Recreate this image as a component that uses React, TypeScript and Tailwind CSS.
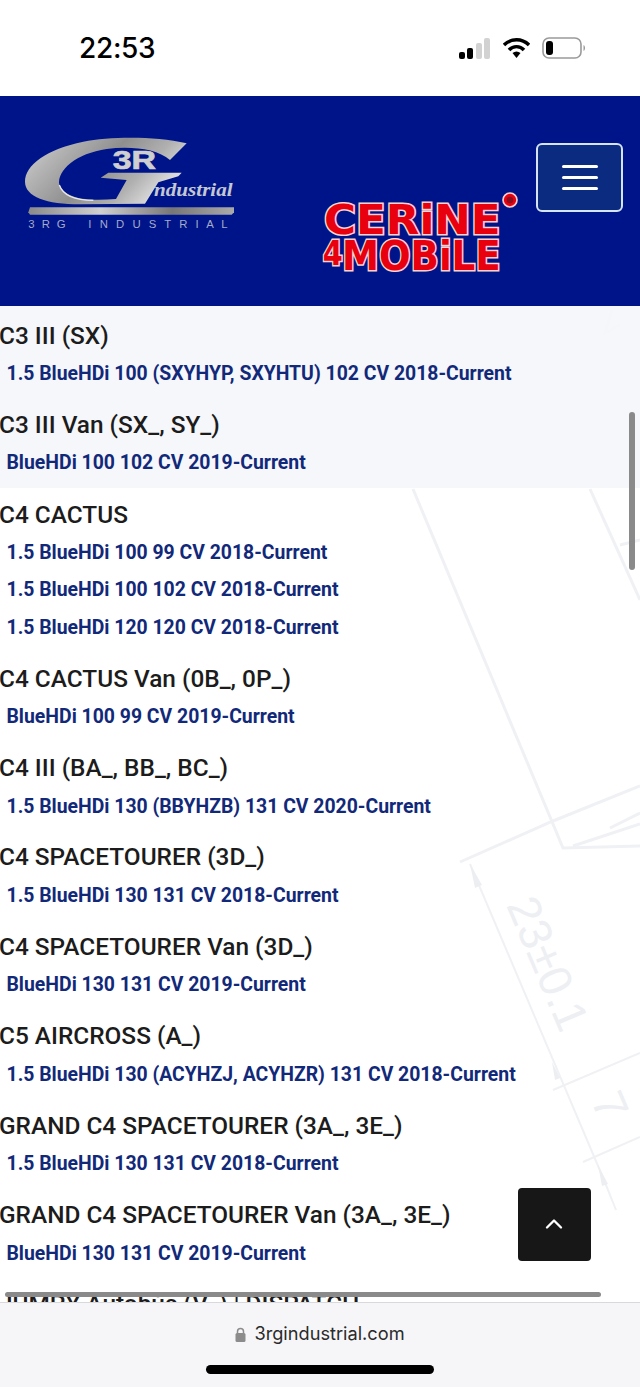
import React from "react";
import { ChevronUp } from "lucide-react";

const sections = [
  { title: "C3 III (SX)", links: ["1.5 BlueHDi 100 (SXYHYP, SXYHTU) 102 CV 2018-Current"] },
  { title: "C3 III Van (SX_, SY_)", links: ["BlueHDi 100 102 CV 2019-Current"] },
];

const sections2 = [
  {
    title: "C4 CACTUS",
    links: ["1.5 BlueHDi 100 99 CV 2018-Current", "1.5 BlueHDi 100 102 CV 2018-Current", "1.5 BlueHDi 120 120 CV 2018-Current"],
  },
  { title: "C4 CACTUS Van (0B_, 0P_)", links: ["BlueHDi 100 99 CV 2019-Current"] },
  { title: "C4 III (BA_, BB_, BC_)", links: ["1.5 BlueHDi 130 (BBYHZB) 131 CV 2020-Current"] },
  { title: "C4 SPACETOURER (3D_)", links: ["1.5 BlueHDi 130 131 CV 2018-Current"] },
  { title: "C4 SPACETOURER Van (3D_)", links: ["BlueHDi 130 131 CV 2019-Current"] },
  { title: "C5 AIRCROSS (A_)", links: ["1.5 BlueHDi 130 (ACYHZJ, ACYHZR) 131 CV 2018-Current"] },
  { title: "GRAND C4 SPACETOURER (3A_, 3E_)", links: ["1.5 BlueHDi 130 131 CV 2018-Current"] },
  { title: "GRAND C4 SPACETOURER Van (3A_, 3E_)", links: ["BlueHDi 130 131 CV 2019-Current"] },
  { title: "JUMPY Autobús (V_) | DISPATCH", links: [] as string[] },
];

function Section({ title, links }: { title: string; links: string[] }) {
  return (
    <div className="pb-[17.5px]">
      <h3 className="h-[30px] -ml-[1px] text-[24.4px] leading-[30px] font-medium text-[#1c1c1c] whitespace-nowrap">{title}</h3>
      <ul className="mt-[4.5px]">
        {links.map((l) => (
          <li key={l} className="h-[37.4px] pl-[6.5px] text-[19.4px] leading-[37.4px] font-bold text-[#12297a] whitespace-nowrap">
            {l}
          </li>
        ))}
      </ul>
    </div>
  );
}

function StatusBar() {
  return (
    <div className="h-[96px] bg-white flex items-center pl-[79px] pr-[54px] shrink-0">
      <span className="text-[28px] font-medium text-black font-['Inter',sans-serif] tracking-[-0.3px]">22:53</span>
      <div className="ml-auto flex items-center">
        <svg width="32" height="21" viewBox="0 0 32 21">
          <rect x="0" y="14" width="6" height="7" rx="2" fill="#000" />
          <rect x="8" y="10" width="6" height="11" rx="2" fill="#000" />
          <rect x="17" y="5" width="6" height="16" rx="2" fill="#d2d2d2" />
          <rect x="25" y="0" width="6" height="21" rx="2" fill="#d2d2d2" />
        </svg>
        <svg width="27" height="20" viewBox="0 0 27 20" className="ml-[12px]">
          <path d="M1 7 C8 0 19 0 26 7" stroke="#000" strokeWidth="3.4" fill="none" />
          <path d="M6 12 C10 7.5 17 7.5 21 12" stroke="#000" strokeWidth="3.4" fill="none" />
          <path d="M9.5 15 C12 13 15 13 17.5 15 L13.5 20 Z" fill="#000" />
        </svg>
        <svg width="44" height="22" viewBox="0 0 44 22" className="ml-[12px]">
          <rect x="1" y="1" width="38" height="20" rx="6" fill="none" stroke="#9a9a9a" strokeWidth="1.6" />
          <rect x="4" y="4" width="7" height="14" rx="3" fill="#000" />
          <path d="M41.5 8 C43.5 9 43.5 13 41.5 14 Z" fill="#9a9a9a" />
        </svg>
      </div>
    </div>
  );
}

function Logo3RG() {
  const small = { fontFamily: "'Liberation Sans', sans-serif", fontSize: 34, fill: "#a4abc8" };
  return (
    <svg width="240" height="120" viewBox="0 0 720 360" className="shrink-0">
      <defs>
        <linearGradient id="silver" x1="0" y1="0" x2="1" y2="0.4">
          <stop offset="0" stopColor="#d6d6d6" />
          <stop offset="0.25" stopColor="#b4b4b4" />
          <stop offset="0.55" stopColor="#8f8f8f" />
          <stop offset="0.8" stopColor="#b0b0b0" />
          <stop offset="1" stopColor="#dcdcdc" />
        </linearGradient>
        <linearGradient id="bar" x1="0" y1="0" x2="1" y2="0">
          <stop offset="0" stopColor="#8a8a8a" />
          <stop offset="0.35" stopColor="#d0d0d0" />
          <stop offset="0.7" stopColor="#777" />
          <stop offset="1" stopColor="#aaa" />
        </linearGradient>
      </defs>
      <path
        d="M530 55 C430 32 300 35 220 50 C110 72 45 120 45 170 C45 215 110 238 210 238 L405 236 L445 172 L505 154 L515 143 L295 143 L272 158 L350 165 L318 222 C240 228 170 225 148 180 C140 135 200 85 290 72 C360 63 440 70 480 105 Z"
        fill="url(#silver)"
      />
      <path d="M148 180 C160 215 200 226 250 226" fill="none" stroke="#e8e8e8" strokeWidth="4" />
      <text x="308" y="132" fontFamily="'Liberation Sans', sans-serif" fontWeight="700" fontSize="76" fill="#cfcfcf" stroke="#cfcfcf" strokeWidth="2" textLength="130" lengthAdjust="spacingAndGlyphs">
        3R
      </text>
      <text x="432" y="213" fontFamily="'Liberation Serif', serif" fontStyle="italic" fontWeight="700" fontSize="58" fill="#c4c8d2" textLength="236" lengthAdjust="spacingAndGlyphs">
        ndustrial
      </text>
      <path d="M60 247 L672 247 L672 262 L665 269 L60 269 L55 262 Z" fill="url(#bar)" />
      <text x="55" y="310" textLength="112" {...small}>3 R G</text>
      <text x="235" y="310" textLength="418" {...small}>I N D U S T R I A L</text>
    </svg>
  );
}

function LogoCerine() {
  const letters = {
    fontFamily: "'DejaVu Sans', sans-serif",
    fontWeight: 700,
    fill: "#e8000f",
    stroke: "#f8d4d4",
    strokeWidth: 9,
    paintOrder: "stroke",
    lengthAdjust: "spacingAndGlyphs" as const,
  };
  return (
    <svg width="220" height="100" viewBox="0 0 660 300" className="shrink-0">
      <text x="42" y="163" fontSize="124" textLength="530" {...letters}>
        CERiNE
      </text>
      <text x="38" y="254" fontSize="100" textLength="60" {...letters}>
        4
      </text>
      <text x="96" y="270" fontSize="122" textLength="476" {...letters}>
        MOBiLE
      </text>
      <circle cx="600" cy="60" r="21" fill="#e8000f" stroke="#f6cfd0" strokeWidth="5" />
      <circle cx="600" cy="60" r="10" fill="#8a1020" />
    </svg>
  );
}

function Header() {
  return (
    <header className="h-[210px] bg-[#00148a] shrink-0 flex items-start pl-[10px] pt-[29px]">
      <Logo3RG />
      <div className="ml-[60px] mt-[55px]">
        <LogoCerine />
      </div>
      <button className="ml-[6px] mt-[18px] w-[87px] h-[69px] rounded-[6px] border-2 border-[#d5e3f5] bg-[#0a2b80] flex flex-col items-center justify-center gap-[8px]">
        <span className="block w-[36px] h-[3px] bg-white rounded-sm" />
        <span className="block w-[36px] h-[3px] bg-white rounded-sm" />
        <span className="block w-[36px] h-[3px] bg-white rounded-sm" />
      </button>
    </header>
  );
}

function Blueprint() {
  return (
    <svg className="absolute inset-0" width="640" height="996" viewBox="0 306 640 996" fill="none" stroke="#f0f1f4" strokeWidth="3">
      <path d="M413 489 L563 848 L640 846" />
      <path d="M590 489 L640 600" />
      <path d="M460 862 L553 821 L640 786" />
      <path d="M610 828 L640 813 M573 846 L640 824" />
      <path d="M470 864 L604 1180 L616 1210" strokeWidth="2" />
      <path d="M553 1090 L640 1053 M583 1162 L640 1137" strokeWidth="2" />
      <path d="M620 545 L640 540 M612 310 L605 333 L620 325" />
      <path d="M470 864 L482 885 L475 888 Z" fill="#eceef2" stroke="none" />
      <path d="M552 1062 L560 1078 L555 1080 Z M598 1165 L608 1184 L602 1186 Z" fill="#eceef2" stroke="none" />
      <text x="0" y="0" transform="translate(506 905) rotate(67)" fontFamily="'Liberation Sans', sans-serif" fontSize="46" fill="#edeff3" stroke="none">
        23±0.1
      </text>
      <text x="0" y="0" transform="translate(590.5 1100) rotate(67)" fontFamily="'Liberation Sans', sans-serif" fontSize="46" fill="#edeff3" stroke="none">
        7
      </text>
    </svg>
  );
}

export default function App() {
  return (
    <div className="w-[640px] h-[1387px] flex flex-col overflow-hidden bg-white font-['Roboto',sans-serif]">
      <StatusBar />
      <Header />
      <main className="relative flex-1 overflow-hidden bg-white">
        <Blueprint />
        <div className="relative">
          <div className="h-[182px] pt-[14.5px] bg-[#f4f6fb]/90 overflow-hidden">
            {sections.map((s) => (
              <Section key={s.title} {...s} />
            ))}
          </div>
          <div className="pt-[11.5px]">
            {sections2.map((s) => (
              <Section key={s.title} {...s} />
            ))}
          </div>
        </div>
        {/* fake browser scrollbars + back-to-top */}
        <div className="absolute right-[5px] top-[106px] w-[6px] h-[158px] rounded-full bg-[#8a8a8a]" />
        <div className="absolute left-[5px] bottom-[5px] w-[596px] h-[5px] rounded-full bg-[#8a8a8a]" />
        <button className="absolute left-[518px] top-[882px] w-[73px] h-[73px] rounded-[4px] bg-[#171717] flex items-center justify-center">
          <ChevronUp className="w-[28px] h-[28px] -mt-[2px] -ml-[2px] text-white" strokeWidth={2} />
        </button>
      </main>
      <footer className="h-[85px] shrink-0 bg-[#f6f6f8] border-t border-[#d9d9dc] flex flex-col items-center">
        <div className="mt-[20px] flex items-center gap-[8px] h-[22px]">
          <svg width="11" height="15" viewBox="0 0 11 15">
            <path d="M2.5 6.5 V4.5 a3 3 0 0 1 6 0 V6.5" fill="none" stroke="#8c8c8c" strokeWidth="1.5" />
            <rect x="0.5" y="6" width="10" height="9" rx="1.5" fill="#8c8c8c" />
          </svg>
          <span className="text-[18.2px] text-[#2a2a2a] font-['Inter',sans-serif]">3rgindustrial.com</span>
        </div>
        <div className="mt-[20px] w-[228px] h-[9px] rounded-full bg-black" />
      </footer>
    </div>
  );
}
